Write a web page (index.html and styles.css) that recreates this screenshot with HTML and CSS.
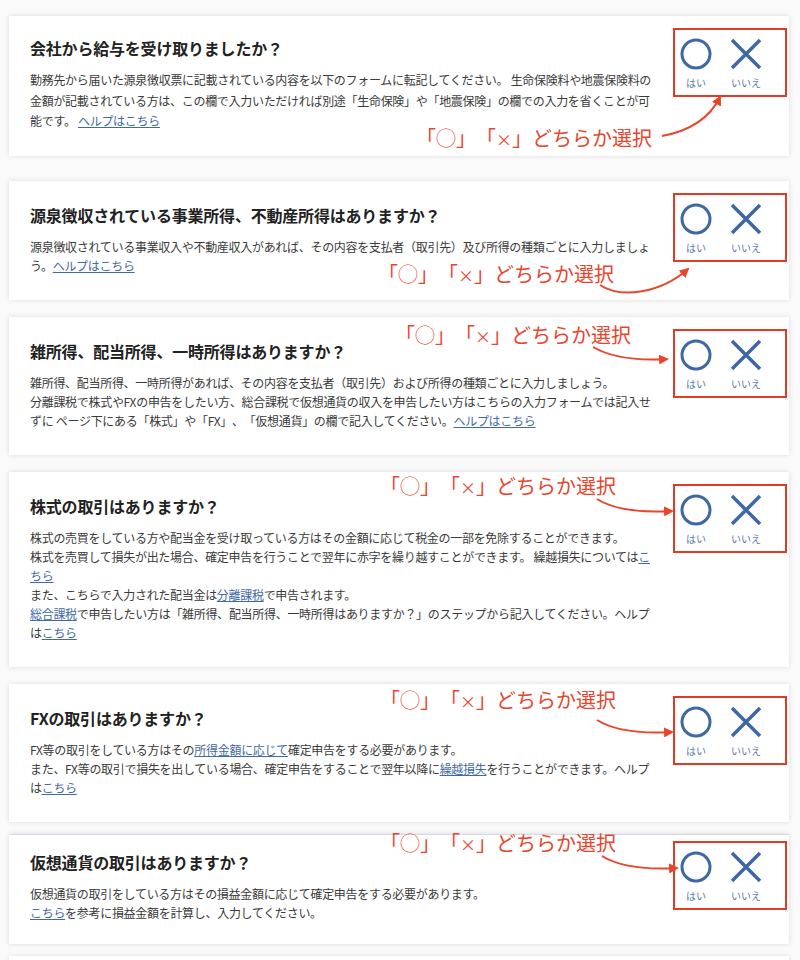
FILE: index.html
```html
<!DOCTYPE html>
<html lang="ja">
<head>
    <meta charset="UTF-8">
    <title>確定申告 ステップ</title>
    <link rel="stylesheet" href="styles.css">
</head>
<body>
    <svg class="defs" width="0" height="0">
        <defs>
            <marker id="head" viewBox="0 0 10 10" refX="8" refY="5" markerWidth="5" markerHeight="5" orient="auto">
                <path d="M0 0 L10 5 L0 10 Z" fill="#e8452c"/>
            </marker>
        </defs>
    </svg>

    <div class="steps">
        <!-- 給与 -->
        <section class="card card--salary">
            <div class="card__body">
                <h2>会社から給与を受け取りましたか？</h2>
                <p class="desc">勤務先から届いた源泉徴収票に記載されている内容を以下のフォームに転記してください。 生命保険料や地震保険料の<br>金額が記載されている方は、この欄で入力いただければ別途「生命保険」や「地震保険」の欄での入力を省くことが可<br>能です。 <a href="#">ヘルプはこちら</a></p>
            </div>
            <div class="choice">
                <div class="choice__item">
                    <svg class="icon" viewBox="0 0 32 32"><circle cx="16" cy="16" r="14"/></svg>
                    <span>はい</span>
                </div>
                <div class="choice__item">
                    <svg class="icon" viewBox="0 0 32 32"><path d="M2 2 L30 30 M30 2 L2 30"/></svg>
                    <span>いいえ</span>
                </div>
            </div>
            <span class="note note--1">「◯」「<span class="note__x">×</span>」どちらか選択</span>
            <svg class="arrow"><path d="M653 120 Q696 112 711 81"/></svg>
        </section>

        <!-- 事業所得 -->
        <section class="card">
            <div class="card__body">
                <h2>源泉徴収されている事業所得、不動産所得はありますか？</h2>
                <p class="desc">源泉徴収されている事業収入や不動産収入があれば、その内容を支払者（取引先）及び所得の種類ごとに入力しましょ<br>う。<a href="#">ヘルプはこちら</a></p>
            </div>
            <div class="choice">
                <div class="choice__item">
                    <svg class="icon" viewBox="0 0 32 32"><circle cx="16" cy="16" r="14"/></svg>
                    <span>はい</span>
                </div>
                <div class="choice__item">
                    <svg class="icon" viewBox="0 0 32 32"><path d="M2 2 L30 30 M30 2 L2 30"/></svg>
                    <span>いいえ</span>
                </div>
            </div>
            <span class="note note--2">「◯」「<span class="note__x">×</span>」どちらか選択</span>
            <svg class="arrow"><path d="M591 104 C612 118 652 112 679 88"/></svg>
        </section>

        <!-- 雑所得 -->
        <section class="card">
            <div class="card__body">
                <h2>雑所得、配当所得、一時所得はありますか？</h2>
                <p class="desc">雑所得、配当所得、一時所得があれば、その内容を支払者（取引先）および所得の種類ごとに入力しましょう。<br>分離課税で株式やFXの申告をしたい方、総合課税で仮想通貨の収入を申告したい方はこちらの入力フォームでは記入せ<br>ずに ページ下にある「株式」や「FX」、「仮想通貨」の欄で記入してください。<a href="#">ヘルプはこちら</a></p>
            </div>
            <div class="choice">
                <div class="choice__item">
                    <svg class="icon" viewBox="0 0 32 32"><circle cx="16" cy="16" r="14"/></svg>
                    <span>はい</span>
                </div>
                <div class="choice__item">
                    <svg class="icon" viewBox="0 0 32 32"><path d="M2 2 L30 30 M30 2 L2 30"/></svg>
                    <span>いいえ</span>
                </div>
            </div>
            <span class="note note--3">「◯」「<span class="note__x">×</span>」どちらか選択</span>
            <svg class="arrow"><path d="M584 30 Q610 45 658 42"/></svg>
        </section>

        <!-- 株式 -->
        <section class="card">
            <div class="card__body">
                <h2>株式の取引はありますか？</h2>
                <p class="desc">株式の売買をしている方や配当金を受け取っている方はその金額に応じて税金の一部を免除することができます。<br>株式を売買して損失が出た場合、確定申告を行うことで翌年に赤字を繰り越すことができます。 繰越損失については<a href="#">こ<br>ちら</a><br>また、こちらで入力された配当金は<a href="#">分離課税</a>で申告されます。<br><a href="#">総合課税</a>で申告したい方は「雑所得、配当所得、一時所得はありますか？」のステップから記入してください。ヘルプ<br>は<a href="#">こちら</a></p>
            </div>
            <div class="choice">
                <div class="choice__item">
                    <svg class="icon" viewBox="0 0 32 32"><circle cx="16" cy="16" r="14"/></svg>
                    <span>はい</span>
                </div>
                <div class="choice__item">
                    <svg class="icon" viewBox="0 0 32 32"><path d="M2 2 L30 30 M30 2 L2 30"/></svg>
                    <span>いいえ</span>
                </div>
            </div>
            <span class="note note--4">「◯」「<span class="note__x">×</span>」どちらか選択</span>
            <svg class="arrow"><path d="M588 27 Q612 42 663 39"/></svg>
        </section>

        <!-- FX -->
        <section class="card">
            <div class="card__body">
                <h2>FXの取引はありますか？</h2>
                <p class="desc">FX等の取引をしている方はその<a href="#">所得金額に応じて</a>確定申告をする必要があります。<br>また、FX等の取引で損失を出している場合、確定申告をすることで翌年以降に<a href="#">繰越損失</a>を行うことができます。ヘルプ<br>は<a href="#">こちら</a></p>
            </div>
            <div class="choice">
                <div class="choice__item">
                    <svg class="icon" viewBox="0 0 32 32"><circle cx="16" cy="16" r="14"/></svg>
                    <span>はい</span>
                </div>
                <div class="choice__item">
                    <svg class="icon" viewBox="0 0 32 32"><path d="M2 2 L30 30 M30 2 L2 30"/></svg>
                    <span>いいえ</span>
                </div>
            </div>
            <span class="note note--5">「◯」「<span class="note__x">×</span>」どちらか選択</span>
            <svg class="arrow"><path d="M588 36 Q612 51 663 48"/></svg>
        </section>

        <!-- 仮想通貨 -->
        <section class="card card--crypto">
            <div class="card__body">
                <h2>仮想通貨の取引はありますか？</h2>
                <p class="desc">仮想通貨の取引をしている方はその損益金額に応じて確定申告をする必要があります。<br><a href="#">こちら</a>を参考に損益金額を計算し、入力してください。</p>
            </div>
            <div class="choice">
                <div class="choice__item">
                    <svg class="icon" viewBox="0 0 32 32"><circle cx="16" cy="16" r="14"/></svg>
                    <span>はい</span>
                </div>
                <div class="choice__item">
                    <svg class="icon" viewBox="0 0 32 32"><path d="M2 2 L30 30 M30 2 L2 30"/></svg>
                    <span>いいえ</span>
                </div>
            </div>
            <span class="note note--6">「◯」「<span class="note__x">×</span>」どちらか選択</span>
            <svg class="arrow"><path d="M593 21 Q617 36 668 33"/></svg>
        </section>

        <section class="card card--next"></section>
    </div>
</body>
</html>
```

FILE: styles.css
```css
body {
    margin: 0;
    background: #fafafa;
    font-family: "Noto Sans CJK JP", "Noto Sans", sans-serif;
    color: #3a3a3a;
    text-spacing-trim: space-all;
}

.defs {
    position: absolute;
}

.steps {
    display: flex;
    flex-direction: column;
    gap: 17px;
    padding: 16px 11px 0 9px;
}

.card {
    position: relative;
    display: flex;
    align-items: flex-start;
    background: #fff;
    box-shadow: 0 0 5px rgba(0, 0, 0, 0.13);
}

.card__body {
    flex: 1;
    padding: 23px 0 25px 21px;
}

.card h2 {
    margin: 0 0 11px;
    font-size: 16px;
    line-height: 22px;
    font-weight: 700;
    letter-spacing: -0.2px;
    color: #222;
}

.desc {
    margin: 0;
    font-size: 12px;
    line-height: 19px;
    letter-spacing: -0.3px;
    white-space: nowrap;
}

.desc a {
    color: #3f6aa6;
    text-decoration: underline;
}

.card--salary {
    margin-bottom: 8px;
}

.card--salary .card__body {
    padding-top: 21px;
    padding-bottom: 24px;
}

.card--salary .desc {
    line-height: 20.5px;
}

.card--crypto {
    margin-top: -5px;
    border-top: 1px solid #d3d9e6;
}

.card--crypto .card__body {
    padding-top: 16px;
    padding-bottom: 22px;
}

.card--crypto .choice {
    margin-top: 6px;
}

.card--next {
    height: 20px;
    margin-top: -5px;
}

/* はい / いいえ */
.choice {
    display: flex;
    gap: 14px;
    width: 107px;
    height: 56px;
    margin: 12px 2px 0 0;
    padding: 8px 0 1px 3px;
    border: 2px solid #e03b24;
}

.choice__item {
    display: flex;
    flex-direction: column;
    align-items: center;
    width: 36px;
}

.choice__item span {
    margin-top: 6px;
    font-size: 10px;
    line-height: 14px;
    color: #5a7bab;
    white-space: nowrap;
}

.icon {
    width: 32px;
    height: 32px;
    fill: none;
    stroke: #3e68a5;
    stroke-width: 3;
}

.icon path {
    stroke-width: 3.5;
}

/* 注釈 */
.note {
    position: absolute;
    font-size: 20px;
    line-height: 24px;
    color: #e8452c;
    white-space: nowrap;
}

.note__x {
    font-size: 16px;
}

.note--1 { left: 407px; top: 110px; }
.note--2 { left: 369px; top: 81px; }
.note--3 { left: 386px; top: 6px; }
.note--4 { left: 371px; top: 2px; }
.note--5 { left: 371px; top: 4px; }
.note--6 { left: 371px; top: -4px; }

.arrow {
    position: absolute;
    left: 0;
    top: 0;
    width: 100%;
    height: 100%;
    overflow: visible;
    pointer-events: none;
}

.arrow path {
    fill: none;
    stroke: #e8452c;
    stroke-width: 2;
    marker-end: url(#head);
}
```
